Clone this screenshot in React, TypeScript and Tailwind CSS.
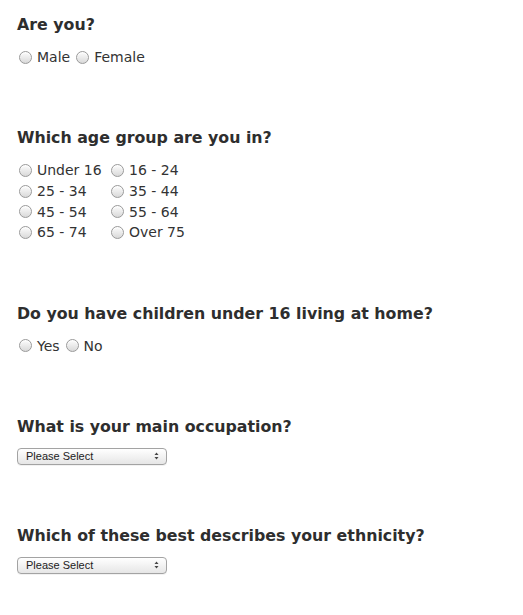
import type { ReactNode } from 'react';

function Radio({ label }: { label: string }) {
  return (
    <label className="flex items-center h-full mr-[4px]">
      <span className="ml-[2px] mr-[5px] w-[13px] h-[13px] shrink-0 rounded-full border border-[#9a9a9a] bg-gradient-to-b from-[#fdfdfd] to-[#d9d9d9] shadow-[inset_0_1px_1px_rgba(255,255,255,0.9)]" />
      <span className="leading-none">{label}</span>
    </label>
  );
}

function Question({ title, children, gap = 'mb-[12px]' }: { title: string; children: ReactNode; gap?: string }) {
  return (
    <div className="mb-[61px]">
      <h3 className={`text-[15.8px] font-bold leading-[20px] text-[#2e2e2e] ${gap}`}>{title}</h3>
      {children}
    </div>
  );
}

function FakeSelect() {
  return (
    <div className="w-[150px] h-[17px] rounded-[4px] border border-[#a3a3a3] bg-gradient-to-b from-white to-[#e6e6e6] flex items-center justify-between pl-[8px] pr-[7px] shadow-[0_1px_0_rgba(0,0,0,0.05)]">
      <span className="text-[11px] leading-none text-[#222] font-['Liberation_Sans',sans-serif]">Please Select</span>
      <svg width="5" height="8" viewBox="0 0 5 8">
        <path d="M0.5 3 L2.5 0.5 L4.5 3 Z" fill="#444" />
        <path d="M0.5 5 L2.5 7.5 L4.5 5 Z" fill="#444" />
      </svg>
    </div>
  );
}

export default function App() {
  const ages = ['Under 16', '16 - 24', '25 - 34', '35 - 44', '45 - 54', '55 - 64', '65 - 74', 'Over 75'];

  return (
    <div className="min-h-screen bg-white pl-[17px] pt-[15px] font-['DejaVu_Sans',Verdana,sans-serif] text-[14px] text-[#333]">
      <Question title="Are you?">
        <div className="flex h-[20px]">
          <Radio label="Male" />
          <Radio label="Female" />
        </div>
      </Question>

      <Question title="Which age group are you in?">
        <div className="grid grid-cols-[92px_auto] auto-rows-[20.7px] w-fit">
          {ages.map(a => (
            <div key={a} className="h-[20.7px]">
              <Radio label={a} />
            </div>
          ))}
        </div>
      </Question>

      <Question title="Do you have children under 16 living at home?">
        <div className="flex h-[20px]">
          <Radio label="Yes" />
          <Radio label="No" />
        </div>
      </Question>

      <Question title="What is your main occupation?" gap="mb-[11px]">
        <FakeSelect />
      </Question>

      <Question title="Which of these best describes your ethnicity?" gap="mb-[11px]">
        <FakeSelect />
      </Question>
    </div>
  );
}
